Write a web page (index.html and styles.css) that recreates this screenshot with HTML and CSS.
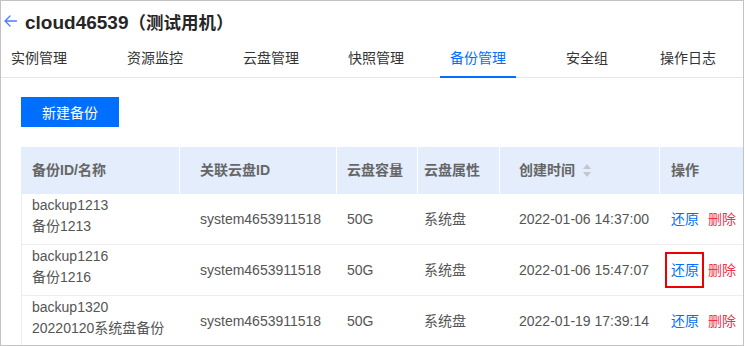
FILE: index.html
```html
<!DOCTYPE html>
<html lang="zh-CN">
<head>
<meta charset="utf-8">
<title>cloud46539（测试用机）</title>
<link rel="stylesheet" href="styles.css">
</head>
<body>
<div class="page">
  <header class="title-bar">
    <svg class="back" width="13" height="12" viewBox="0 0 13 12" aria-hidden="true">
      <path d="M12.5 6H1 M6 1 L1 6 L6 11" fill="none" stroke="#4b7bff" stroke-width="1.3" stroke-linecap="round" stroke-linejoin="round"/>
    </svg>
    <h1 class="title">cloud46539<span class="title-cjk">（测试用机）</span></h1>
  </header>

  <nav class="tabs">
    <a class="tab"><span class="tab-label">实例管理</span></a>
    <a class="tab"><span class="tab-label">资源监控</span></a>
    <a class="tab"><span class="tab-label">云盘管理</span></a>
    <a class="tab"><span class="tab-label">快照管理</span></a>
    <a class="tab is-active"><span class="tab-label">备份管理</span></a>
    <a class="tab"><span class="tab-label">安全组</span></a>
    <a class="tab"><span class="tab-label">操作日志</span></a>
  </nav>

  <main class="content">
    <button class="btn-primary">新建备份</button>

    <div class="table">
      <div class="row head">
        <div class="cell c1">备份ID/名称</div>
        <div class="cell c2">关联云盘ID</div>
        <div class="cell c3">云盘容量</div>
        <div class="cell c4">云盘属性</div>
        <div class="cell c5">创建时间
          <svg class="sort" width="8" height="13" viewBox="0 0 8 13" aria-hidden="true">
            <path d="M4 0 L8 5 H0 Z" fill="#c3c6cc"/>
            <path d="M0 8 H8 L4 13 Z" fill="#c3c6cc"/>
          </svg>
        </div>
        <div class="cell c6">操作</div>
      </div>

      <div class="row body">
        <div class="cell c1 two-line"><span>backup1213</span><span>备份1213</span></div>
        <div class="cell c2">system4653911518</div>
        <div class="cell c3">50G</div>
        <div class="cell c4">系统盘</div>
        <div class="cell c5">2022-01-06 14:37:00</div>
        <div class="cell c6 actions"><a class="link">还原</a><a class="link danger">删除</a></div>
      </div>

      <div class="row body">
        <div class="cell c1 two-line"><span>backup1216</span><span>备份1216</span></div>
        <div class="cell c2">system4653911518</div>
        <div class="cell c3">50G</div>
        <div class="cell c4">系统盘</div>
        <div class="cell c5">2022-01-06 15:47:07</div>
        <div class="cell c6 actions"><a class="link highlighted">还原</a><a class="link danger">删除</a></div>
      </div>

      <div class="row body">
        <div class="cell c1 two-line"><span>backup1320</span><span>20220120系统盘备份</span></div>
        <div class="cell c2">system4653911518</div>
        <div class="cell c3">50G</div>
        <div class="cell c4">系统盘</div>
        <div class="cell c5">2022-01-19 17:39:14</div>
        <div class="cell c6 actions"><a class="link">还原</a><a class="link danger">删除</a></div>
      </div>
    </div>
  </main>
</div>
</body>
</html>
```

FILE: styles.css
```css
* {
  box-sizing: border-box;
}

html, body {
  margin: 0;
  padding: 0;
  background: #ffffff;
}

body {
  font-family: "Liberation Sans", "Noto Sans CJK SC", sans-serif;
  font-size: 14px;
  color: #555555;
}

.page {
  width: 744px;
  height: 346px;
  border: 1px solid #c3c3c3;
  overflow: hidden;
  background: #ffffff;
}

/* title */
.title-bar {
  display: flex;
  align-items: center;
  gap: 8px;
  padding: 8px 0 0 3px;
}

.back {
  display: block;
  flex: none;
  margin-bottom: 4px;
}

.title {
  margin: 0;
  font-size: 19px;
  line-height: 28px;
  font-weight: bold;
  color: #262626;
}

.title-cjk {
  font-size: 17.5px;
}

/* tabs */
.tabs {
  display: grid;
  grid-template-columns: 116px 116px 105px 102px 116px 94px auto;
  align-items: end;
  border-bottom: 1px solid #e6e6e6;
}

.tab {
  justify-self: start;
  margin-bottom: -1px;
  padding: 11px 10px 8px;
  line-height: 20px;
  font-size: 14px;
  color: #333333;
  border-bottom: 2px solid transparent;
  text-decoration: none;
}

.tab.is-active {
  color: #006eff;
  border-bottom-color: #006eff;
}

/* content */
.content {
  padding: 19px 20px 0;
}

.btn-primary {
  display: block;
  width: 98px;
  height: 30px;
  padding: 0;
  border: 0;
  border-radius: 0;
  background: #006eff;
  color: #ffffff;
  font-family: "Liberation Sans", "Noto Sans CJK SC", sans-serif;
  font-size: 14px;
}

/* table */
.table {
  margin-top: 20px;
  width: 780px;
}

.row {
  display: grid;
  grid-template-columns: 159px 157px 81px 82px 160px 121px;
}

.cell {
  display: flex;
  align-items: center;
  line-height: 21px;
  white-space: nowrap;
}

.head {
  height: 47px;
  background: #e3edfc;
}

.head .cell {
  border-right: 1px solid #ffffff;
  font-weight: bold;
  color: #666666;
}

.head .cell:last-child {
  border-right: 0;
}

.body {
  height: 51px;
  border-bottom: 1px solid #ebedf2;
}

.body .c1 {
  border-left: 1px solid #ebedf2;
}

.c1 { padding-left: 11px; }
.c2 { padding-left: 20px; }
.c3 { padding-left: 10px; }
.c4 { padding-left: 6px; }
.c5 { padding-left: 19px; }
.c6 { padding-left: 11px; }

.body .c1 {
  padding-left: 10px;
}

.two-line {
  flex-direction: column;
  align-items: flex-start;
  justify-content: center;
  padding-bottom: 7px;
}

.sort {
  display: block;
  margin-left: 8px;
}

.actions {
  gap: 9px;
}

.link {
  color: #006eff;
  text-decoration: none;
}

.link.danger {
  color: #f2304b;
}

.highlighted {
  position: relative;
}

.highlighted::after {
  content: "";
  position: absolute;
  top: -8px;
  bottom: -7px;
  left: -6px;
  right: -5px;
  border: 2px solid #ee0000;
}
```
